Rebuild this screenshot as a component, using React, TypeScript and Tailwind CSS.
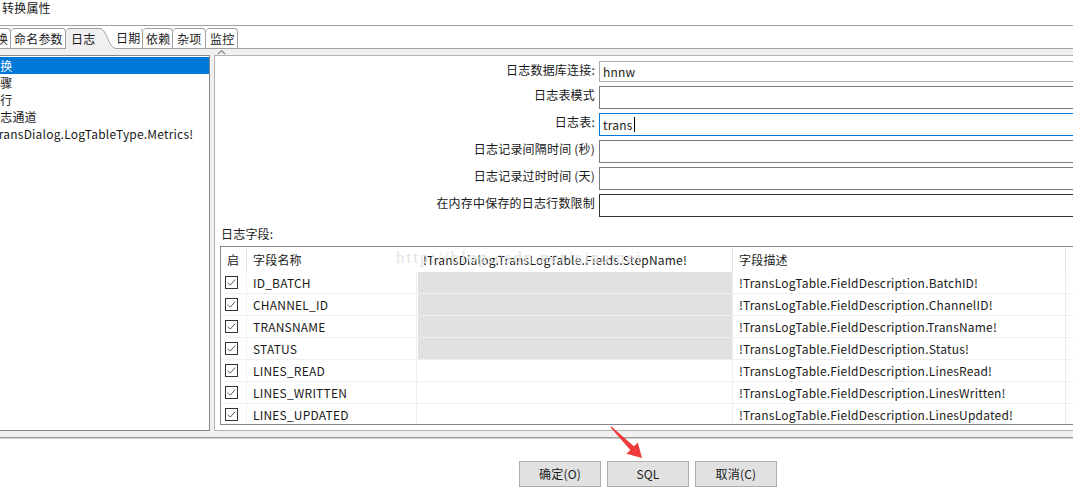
import React from 'react';

const fields = [
  { name: 'ID_BATCH', desc: '!TransLogTable.FieldDescription.BatchID!', locked: true },
  { name: 'CHANNEL_ID', desc: '!TransLogTable.FieldDescription.ChannelID!', locked: true },
  { name: 'TRANSNAME', desc: '!TransLogTable.FieldDescription.TransName!', locked: true },
  { name: 'STATUS', desc: '!TransLogTable.FieldDescription.Status!', locked: true },
  { name: 'LINES_READ', desc: '!TransLogTable.FieldDescription.LinesRead!', locked: false },
  { name: 'LINES_WRITTEN', desc: '!TransLogTable.FieldDescription.LinesWritten!', locked: false },
  { name: 'LINES_UPDATED', desc: '!TransLogTable.FieldDescription.LinesUpdated!', locked: false },
];

const formRows = [
  { label: '日志数据库连接:', value: 'hnnw', box: 'h-[21px] border-[#acacac]' },
  { label: '日志表模式', value: '', box: 'h-[23px] border-[#7a7a7a]' },
  { label: '日志表:', value: 'trans', box: 'h-[23px] border-[#0078d7]', caret: true },
  { label: '日志记录间隔时间 (秒)', value: '', box: 'h-[23px] border-[#7a7a7a]' },
  { label: '日志记录过时时间 (天)', value: '', box: 'h-[23px] border-[#7a7a7a]' },
  { label: '在内存中保存的日志行数限制', value: '', box: 'h-[23px] border-[#333333]' },
];

const listItems = ['转换', '步骤', '运行', '日志通道', '!TransDialog.LogTableType.Metrics!'];

function Check() {
  return (
    <svg width="13" height="13" viewBox="0 0 13 13">
      <rect x="0.5" y="0.5" width="12" height="12" fill="#fff" stroke="#333" />
      <path d="M2.8 6.6 L5.3 9.1 L10.2 3.6" fill="none" stroke="#5a5a5a" strokeWidth="1" />
    </svg>
  );
}

export default function App() {
  return (
    <div className="relative w-[1073px] h-[491px] overflow-hidden bg-white text-[12px] tracking-[0.2px] text-[#1a1a1a] font-['Noto_Sans_CJK_SC',sans-serif]">
      {/* title */}
      <div className="h-[25px] px-[2px] pt-[1px] leading-[14px]">转换属性</div>
      <div className="h-px bg-[#a0a0a0]" />

      {/* tabs */}
      <div className="flex items-end h-[23px] pt-[2px] leading-[20px]">
        <div className="w-[11px] shrink-0 h-[21px] overflow-hidden border-t border-r border-b border-[#a0a0a0] rounded-tr-[4px] whitespace-nowrap">
          <span className="-ml-[4px] inline-block">换</span>
        </div>
        <div className="w-[55px] shrink-0 h-[21px] pl-[3px] border-t border-r border-b border-[#a0a0a0] rounded-t-[4px]">命名参数</div>
        <div className="w-[34px] shrink-0 h-[21px] pl-[5px] bg-[#f0f0f0] border-t border-[#a0a0a0] rounded-tl-[4px]">日志</div>
        <svg width="16" height="21" viewBox="0 0 16 21" className="block shrink-0">
          <path d="M0 0.5 C 7 0.5, 8 20.5, 16 20.5 L16 21 L0 21 Z" fill="#f0f0f0" />
          <path d="M0 0.5 C 7 0.5, 8 20.5, 16 20.5" fill="none" stroke="#a0a0a0" />
        </svg>
        <div className="w-[27px] shrink-0 h-[21px] border-r border-b border-[#a0a0a0] rounded-tr-[4px]">日期</div>
        <div className="w-[30px] shrink-0 h-[21px] pl-[3px] border-t border-r border-b border-[#a0a0a0] rounded-t-[4px]">依赖</div>
        <div className="w-[33px] shrink-0 h-[21px] pl-[4px] border-t border-r border-b border-[#a0a0a0] rounded-t-[4px]">杂项</div>
        <div className="w-[32px] shrink-0 h-[21px] pl-[4px] border-t border-r border-b border-[#a0a0a0] rounded-t-[4px]">监控</div>
        <div className="flex-1 h-[21px] border-b border-[#a0a0a0]" />
      </div>

      {/* content */}
      <div className="relative h-[388px] bg-[#f0f0f0] pt-[6px] flex">
        <svg width="9" height="6" viewBox="0 0 9 6" className="absolute left-[217px] top-[0px]">
          <path d="M1 5 L4.5 1.5 L8 5" fill="none" stroke="#8a8a8a" strokeWidth="1.2" />
        </svg>

        {/* left list */}
        <div className="shrink-0 -ml-[1px] w-[211px] h-[376px] bg-white border border-[#828790] pt-[1px] overflow-hidden">
          {listItems.map((t, i) => (
            <div
              key={i}
              className={`h-[17px] leading-[17px] whitespace-nowrap ${i === 0 ? 'bg-[#0078d7] text-white' : ''}`}
            >
              <span className="-ml-[12px] inline-block">{t}</span>
            </div>
          ))}
        </div>

        {/* right panel */}
        <div className="shrink-0 ml-[4px] w-[870px] h-[376px] bg-white border border-[#b4b4b4] overflow-hidden">
          <div className="pt-[5px] flex flex-col gap-[4px]">
            {formRows.map((r, i) => (
              <div key={i} className="flex items-start gap-[4px]">
                <div className="shrink-0 w-[380px] text-right pt-[1px] leading-[16px] whitespace-nowrap">{r.label}</div>
                <div className={`shrink-0 w-[480px] border ${r.box} flex items-center pl-[3px] leading-[16px]`}>
                  <span>{r.value}</span>
                  {r.caret && <span className="inline-block w-px h-[15px] bg-black ml-[1px]" />}
                </div>
              </div>
            ))}
          </div>

          <div className="mt-[9px] pl-[6px] leading-[16px]">日志字段:</div>

          <div className="mt-[4px] ml-[5px] w-[870px] h-[179px] border border-[#828790] overflow-hidden">
            <div className="flex h-[25px] leading-[25px]">
              <div className="shrink-0 w-[26px] pl-[6px] border-r border-[#e5e5e5]">启</div>
              <div className="shrink-0 w-[170px] pl-[6px]">字段名称</div>
              <div className="shrink-0 w-[316px] pl-[6px] border-r border-[#e5e5e5] whitespace-nowrap">!TransDialog.TransLogTable.Fields.StepName!</div>
              <div className="shrink-0 w-[333px] pl-[6px] border-r border-[#e5e5e5]">字段描述</div>
              <div className="flex-1" />
            </div>
            {fields.map((f) => (
              <div key={f.name} className="flex h-[22px] leading-[21px] border-b border-[#f0f0f0]">
                <div className="shrink-0 w-[26px] pl-[4px] flex items-center border-r border-[#eef0f6]">
                  <Check />
                </div>
                <div className="shrink-0 w-[170px] pl-[6px] border-r border-[#eef0f6]">{f.name}</div>
                <div className={`shrink-0 w-[316px] border-r border-[#eef0f6] ${f.locked ? 'bg-[#e1e1e1] border-l border-l-white' : ''}`} />
                <div className="shrink-0 w-[333px] pl-[6px] border-r border-[#e8ebf3] whitespace-nowrap">{f.desc}</div>
                <div className="flex-1" />
              </div>
            ))}
          </div>
        </div>
      </div>

      <div className="h-[2px] bg-[#a0a0a0] border-b border-[#d0d0d0]" />

      {/* buttons */}
      <div className="flex gap-[6px] pl-[519px] pt-[22px]">
        <button className="w-[82px] h-[26px] bg-[#e1e1e1] border border-[#adadad]">确定(O)</button>
        <button className="w-[82px] h-[26px] bg-[#e1e1e1] border border-[#adadad]">SQL</button>
        <button className="w-[82px] h-[26px] bg-[#e1e1e1] border border-[#adadad]">取消(C)</button>
      </div>

      {/* watermark */}
      <div className="absolute left-[396px] top-[248px] text-[17px] leading-[20px] tracking-[2px] text-[#e3e3e3] font-['Liberation_Serif',serif] pointer-events-none">
        http://blog.csdn.net/xiaomei
      </div>

      {/* red arrow */}
      <svg className="absolute left-0 top-0 pointer-events-none" width="1073" height="491">
        <polygon
          points="611.4,426.6 633.9,446.3 637.8,442.4 642,458 626.4,453.8 630.3,449.9 610.6,427.4"
          fill="#ef3b3b"
        />
      </svg>
    </div>
  );
}
